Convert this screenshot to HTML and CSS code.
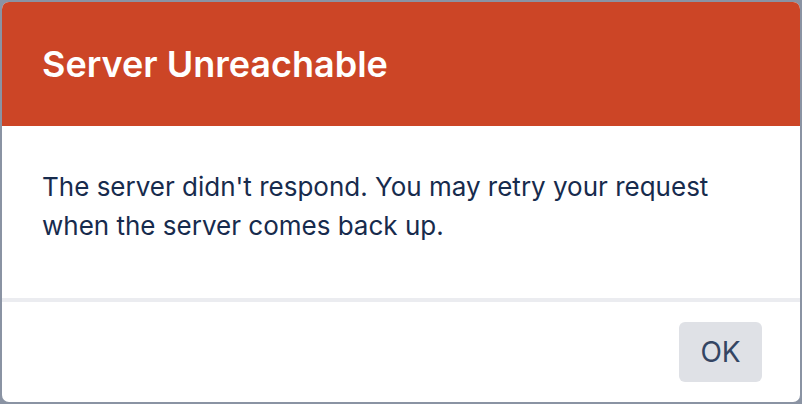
FILE: index.html
```html
<!DOCTYPE html>
<html lang="en">
<head>
<meta charset="utf-8">
<title>Server Unreachable</title>
<link rel="stylesheet" href="styles.css">
</head>
<body>
<div class="backdrop">
  <div class="dialog" role="dialog" aria-labelledby="dlg-title">
    <header class="dialog-header">
      <h1 id="dlg-title" class="dialog-title">Server Unreachable</h1>
    </header>
    <div class="dialog-body">
      <p class="dialog-text">The server didn't respond. You may retry your request when the server comes back up.</p>
    </div>
    <footer class="dialog-footer">
      <button class="btn-ok" type="button">OK</button>
    </footer>
  </div>
</div>
</body>
</html>
```

FILE: styles.css
```css
html, body {
  margin: 0;
  padding: 0;
}
body {
  width: 802px;
  height: 404px;
  overflow: hidden;
  background: #8a93a3;
  font-family: Inter, "Noto Sans", "Liberation Sans", sans-serif;
}
.backdrop {
  padding: 2px;
  height: 404px;
  box-sizing: border-box;
}
.dialog {
  width: 798px;
  height: 400px;
  background: #ffffff;
  border-radius: 7px;
  overflow: hidden;
  display: flex;
  flex-direction: column;
}
.dialog-header {
  background: #cc4526;
  height: 124px;
  padding: 0 40px;
  display: flex;
  align-items: center;
  flex: none;
}
.dialog-title {
  margin: 0;
  color: #ffffff;
  font-size: 36px;
  font-weight: 600;
  letter-spacing: 0;
}
.dialog-body {
  height: 176px;
  padding: 41px 40px 0 40px;
  box-sizing: border-box;
  border-bottom: 4px solid #ebecf0;
  flex: none;
}
.dialog-text {
  margin: 0;
  color: #172b4d;
  font-size: 26px;
  line-height: 39px;
}
.dialog-footer {
  flex: 1;
  display: flex;
  justify-content: flex-end;
  align-items: center;
  padding: 0 38px;
}
.btn-ok {
  width: 83px;
  height: 60px;
  border: none;
  border-radius: 6px;
  background: #dfe1e6;
  color: #344563;
  font-family: inherit;
  font-size: 28px;
  font-weight: 400;
  cursor: pointer;
}
```
